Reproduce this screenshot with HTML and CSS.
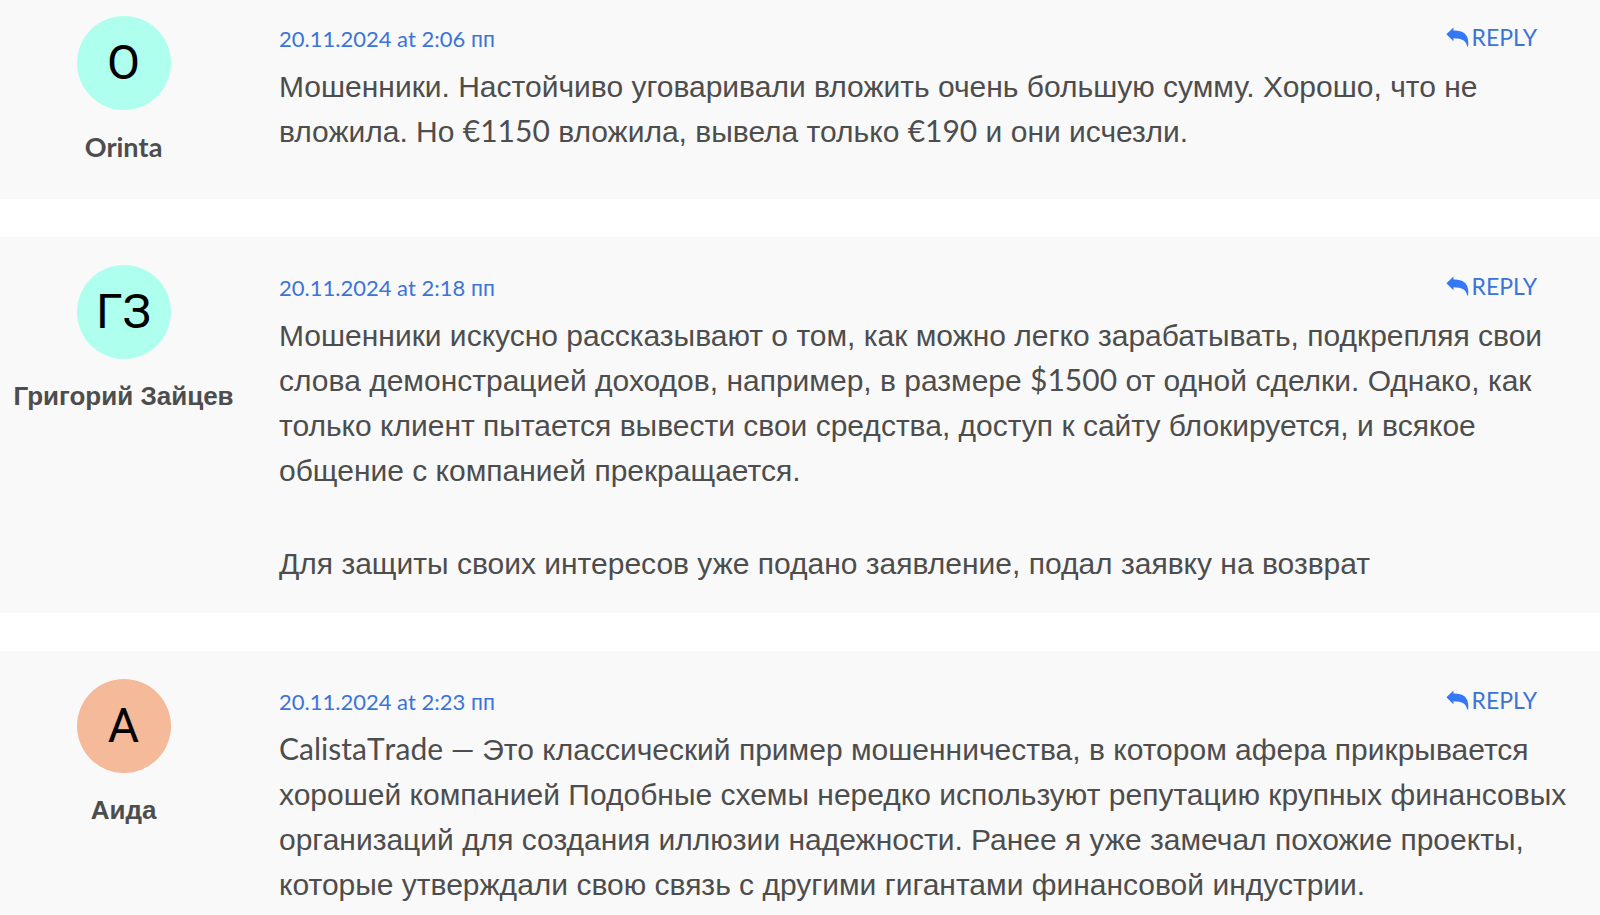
FILE: index.html
```html
<!DOCTYPE html>
<html lang="ru">
<head>
    <meta charset="UTF-8">
    <meta name="viewport" content="width=device-width, initial-scale=1.0">
    <title>Comments</title>
    <link rel="stylesheet" href="styles.css">
</head>
<body>
    <!-- Reply arrow, shared by all comments -->
    <svg class="sprite" aria-hidden="true">
        <symbol id="reply-icon" viewBox="0 0 24 20">
            <path d="M0.4 7.2 L7.8 0.2 V3.2 C17.4 2.8 24.8 6.6 23 20 H22 C21.4 14.2 17 11.6 7.8 11.4 V14.4 Z"/>
        </symbol>
    </svg>

    <main class="comments">
        <article class="comment">
            <div class="author">
                <div class="avatar mint">O</div>
                <b class="name latin">Orinta</b>
            </div>
            <div class="body">
                <header class="meta">
                    <a class="date" href="#"><span class="latin">20.11.2024 at 2:06 </span>пп</a>
                    <a class="reply" href="#"><svg class="icon" aria-hidden="true"><use href="#reply-icon"/></svg>REPLY</a>
                </header>
                <p>Мошенники. Настойчиво уговаривали вложить очень большую сумму. Хорошо, что не вложила. Но <span class="latin">€1150</span> вложила, вывела только <span class="latin">€190</span> и они исчезли.</p>
            </div>
        </article>

        <article class="comment">
            <div class="author">
                <div class="avatar mint">ГЗ</div>
                <b class="name">Григорий Зайцев</b>
            </div>
            <div class="body">
                <header class="meta">
                    <a class="date" href="#"><span class="latin">20.11.2024 at 2:18 </span>пп</a>
                    <a class="reply" href="#"><svg class="icon" aria-hidden="true"><use href="#reply-icon"/></svg>REPLY</a>
                </header>
                <p>Мошенники искусно рассказывают о том, как можно легко зарабатывать, подкрепляя свои слова демонстрацией доходов, например, в размере <span class="latin">$1500</span> от одной сделки. Однако, как только клиент пытается вывести свои средства, доступ к сайту блокируется, и всякое общение с компанией прекращается.</p>
                <p>Для защиты своих интересов уже подано заявление, подал заявку на возврат</p>
            </div>
        </article>

        <article class="comment">
            <div class="author">
                <div class="avatar peach">А</div>
                <b class="name">Аида</b>
            </div>
            <div class="body">
                <header class="meta">
                    <a class="date" href="#"><span class="latin">20.11.2024 at 2:23 </span>пп</a>
                    <a class="reply" href="#"><svg class="icon" aria-hidden="true"><use href="#reply-icon"/></svg>REPLY</a>
                </header>
                <p><span class="latin">CalistaTrade — </span>Это классический пример мошенничества, в котором афера прикрывается хорошей компанией Подобные схемы нередко используют репутацию крупных финансовых организаций для создания иллюзии надежности. Ранее я уже замечал похожие проекты, которые утверждали свою связь с другими гигантами финансовой индустрии.</p>
            </div>
        </article>
    </main>
</body>
</html>
```
FILE: styles.css
```css
body {
    margin: 0;
    background: #ffffff;
    color: #4d4d4d;
    font-family: "Liberation Sans", Arial, sans-serif;
    font-size: 30px;
    line-height: 45px;
}

.latin {
    font-family: Lato, sans-serif;
    font-kerning: none;
}

/* keeps the second font from stretching the line */
span.latin {
    line-height: 1;
}

.sprite {
    display: none;
}

.comments {
    display: flex;
    flex-direction: column;
    gap: 38px;
}

.comment {
    display: flex;
    gap: 32px;
    padding: 28px 24px 27px 0;
    background: #f9f9f9;
}

.comment:first-child {
    padding-top: 16px;
}

.author {
    display: flex;
    flex-direction: column;
    align-items: center;
    gap: 12px;
    flex: 0 0 247px;
}

.avatar {
    width: 94px;
    height: 94px;
    border-radius: 50%;
    color: #000000;
    font-family: Roboto, sans-serif;
    font-size: 48px;
    line-height: 94px;
    text-align: center;
}

.mint {
    background: #aeffed;
}

.peach {
    background: #f5ba9a;
}

.name {
    font-size: 26px;
    line-height: 50px;
    white-space: nowrap;
}

.name.latin {
    font-size: 27px;
}

.body {
    flex: 1;
    min-width: 0;
}

.meta {
    display: flex;
    justify-content: space-between;
    align-items: flex-start;
    padding-right: 39px;
    font-size: 22px;
    line-height: 48px;
}

.meta a {
    color: #3b74d8;
    text-decoration: none;
}

.reply {
    display: flex;
    align-items: center;
    gap: 3px;
    font-family: Lato, sans-serif;
    font-size: 23px;
    line-height: 42px;
}

.reply .icon {
    width: 23px;
    height: 20px;
    fill: #3478f6;
}

p {
    margin: 0;
}

p + p {
    margin-top: 48px;
}
```
